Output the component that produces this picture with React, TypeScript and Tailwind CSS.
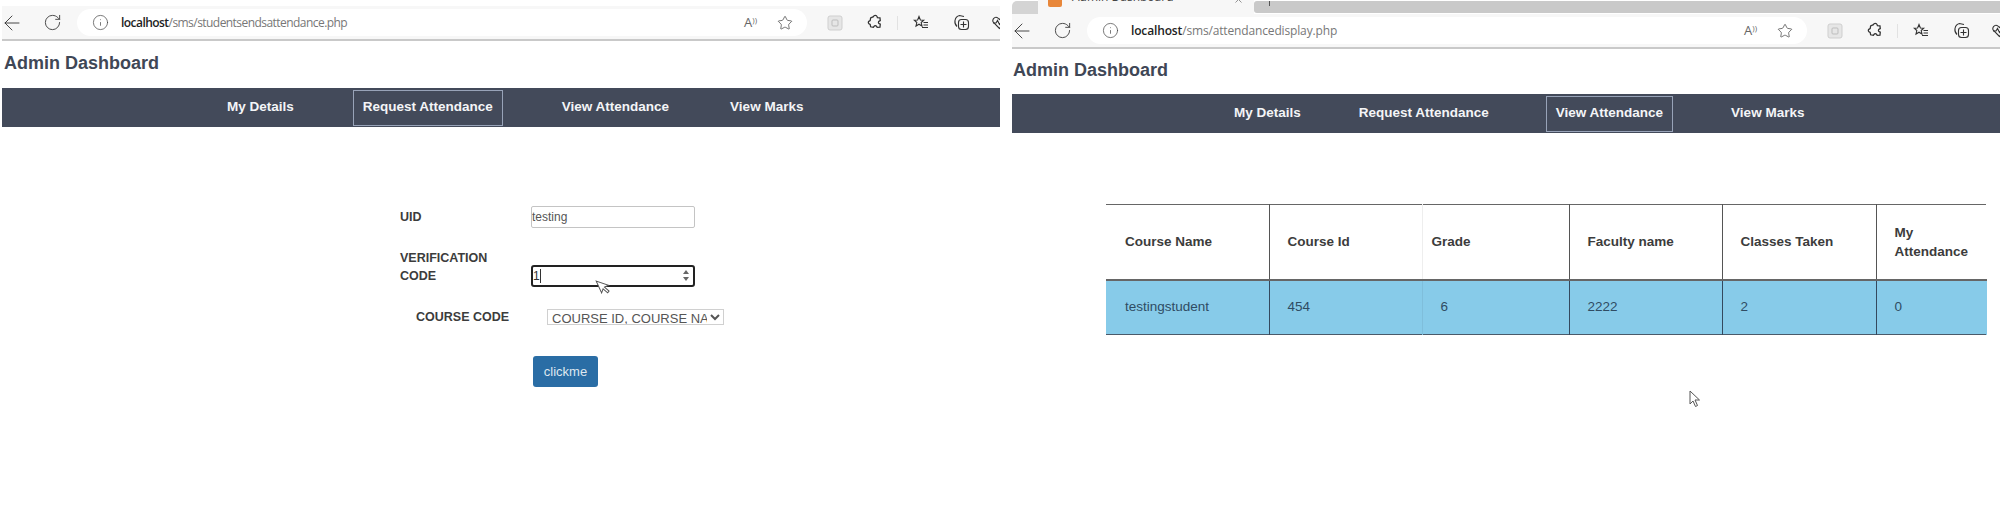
import { ArrowLeft, RotateCw, Info, Star, X } from 'lucide-react'

const NAV = ['My Details', 'Request Attendance', 'View Attendance', 'View Marks']

const HEAD_CELLS = [
  { label: 'Course Name', w: 'w-[163px]', pad: 'pl-[19px]', border: 'border-[#555]' },
  { label: 'Course Id', w: 'w-[153px]', pad: 'pl-[18px]', border: 'border-r-[#eee]' },
  { label: 'Grade', w: 'w-[147px]', pad: 'pl-[9px]', border: 'border-[#555]' },
  { label: 'Faculty name', w: 'w-[153px]', pad: 'pl-[18px]', border: 'border-[#555]' },
  { label: 'Classes Taken', w: 'w-[154px]', pad: 'pl-[18px]', border: 'border-[#555]' },
  { label: 'My Attendance', w: 'w-[110px]', pad: 'pl-[18px] pr-[10px]', border: 'border-r-white' },
]

const ROW_CELLS = [
  { value: 'testingstudent', pad: 'pl-[19px]', border: 'border-[#34495e]' },
  { value: '454', pad: 'pl-[18px]', border: 'border-r-[#7fbedb]' },
  { value: '6', pad: 'pl-[18px]', border: 'border-[#34495e]' },
  { value: '2222', pad: 'pl-[18px]', border: 'border-[#34495e]' },
  { value: '2', pad: 'pl-[18px]', border: 'border-[#34495e]' },
  { value: '0', pad: 'pl-[18px]', border: 'border-r-[#87cbe9]' },
]

function ToolbarIcons() {
  return (
    <div className="flex items-center text-[#555]">
      {/* square thing */}
      <svg width="16" height="16" viewBox="0 0 16 16" fill="none" className="ml-[20px]">
        <rect x="1" y="1" width="14" height="14" rx="2" fill="#e6e6e6" stroke="#cfcfcf" />
        <rect x="5" y="5" width="6" height="6" rx="1" stroke="#bdbdbd" />
      </svg>
      {/* puzzle */}
      <svg width="17" height="17" viewBox="0 0 16 16" fill="none" stroke="#333" strokeWidth="1.2" className="ml-[24px]">
        <path d="M6 2.500c.5-1.500 3-1.500 3.500 0l.3.900 2.400.2.3 2.600-1 .5c-1 .6-1 1.800 0 2.400l1 .5-.3 2.700-2.600.3-.6-1c-.6-1-1.800-1-2.400 0l-.6 1-2.600-.6L3 9.800l-1-.5C1 8.700 1 7.300 2 6.700l1-.5.400-2.600z" />
      </svg>
      <div className="ml-[13px] w-px h-[14px] bg-[#e2e2e2]" />
      {/* favourites */}
      <svg width="16" height="16" viewBox="0 0 16 16" fill="none" stroke="#333" strokeWidth="1.1" className="ml-[15px]">
        <path d="M6 1.500 7.400 5l3.300.2-2.500 2.300.8 3.500L6 9.200 3 11l.8-3.500L1.300 5.200 4.600 5z" />
        <path d="M10.500 7.500h4.500M10.500 10h4.500M9 12.500h6" />
      </svg>
      {/* collections */}
      <svg width="17" height="17" viewBox="0 0 17 17" fill="none" stroke="#333" strokeWidth="1.1" className="ml-[24px]">
        <path d="M4 12.500C2.500 11 1.500 9 2 6.500 2.500 4 4 2 6.500 1.500L11 2.500" />
        <rect x="5.500" y="5.500" width="10" height="10" rx="3" />
        <path d="M10.500 7.500v6M7.500 10.500h6" />
      </svg>
      {/* heartbeat, runs off the window */}
      <svg width="17" height="16" viewBox="0 0 17 16" fill="none" stroke="#333" strokeWidth="1.1" className="ml-[21px] shrink-0">
        <path d="M8.500 13.500 2.500 7.500C0.500 5 3.500 1.500 6 2.500c1 .4 2 1.500 2.500 2 .5-.5 1.500-1.600 2.500-2 2.500-1 5.500 2.500 3.500 5z" />
        <path d="M2 8h3l1.500-2.500 2 4 1.500-2h5" />
      </svg>
    </div>
  )
}

function BrowserBar({ host, path, pillWidth, urlClass }: { host: string; path: string; pillWidth: string; urlClass: string }) {
  return (
    <div className="h-[35px] bg-[#f7f7f7] border-b-2 border-[#c9c9c9] flex items-center overflow-hidden">
      <ArrowLeft size={24} strokeWidth={0.9} className="-ml-[2px] shrink-0 text-[#333]" />
      <RotateCw size={19} strokeWidth={1.1} className="ml-[19px] shrink-0 text-[#333]" />
      <div className={`ml-[15px] h-[27px] rounded-full bg-white flex items-center shrink-0 ${pillWidth}`}>
        <Info size={17} strokeWidth={1} className="ml-[15px] shrink-0 text-[#444]" />
        <span className={`ml-[12px] font-['Open_Sans',sans-serif] text-[12px] text-[#777] ${urlClass}`}>
          <span className="text-[#222] font-semibold">{host}</span>
          {path}
        </span>
        <div className="ml-auto flex items-center">
          <span className="font-['Open_Sans',sans-serif] text-[13px] text-[#666] leading-none">
            A<sup className="text-[8px]">))</sup>
          </span>
          <Star size={16} strokeWidth={1.1} className="ml-[20px] mr-[14px] text-[#444]" />
        </div>
      </div>
      <ToolbarIcons />
    </div>
  )
}

function NavBar({ active, items }: { active: string; items: string[] }) {
  return (
    <nav className={`h-[39px] bg-[#434a5a] flex items-center font-['Liberation_Sans',sans-serif] font-bold text-[13.500px] text-[#f4f5f7] ${items[0]}`}>
      {NAV.map((label, i) => (
        <a
          key={label}
          className={`h-[36px] flex items-center px-[9px] border ${i > 0 ? items[i] : ''} ${
            label === active ? 'border-[#98a3b8]' : 'border-transparent'
          }`}
        >
          {label}
        </a>
      ))}
    </nav>
  )
}

function Title({ className }: { className: string }) {
  return (
    <h1 className={`font-['Liberation_Sans',sans-serif] font-bold text-[18px] leading-[24px] text-[#3f4756] ${className}`}>
      Admin Dashboard
    </h1>
  )
}

function RequestForm() {
  return (
    <form className="ml-[398px] mt-[79px] font-['Liberation_Sans',sans-serif] text-[#3c3c3c]">
      <div className="flex items-center h-[22px]">
        <label className="w-[131px] font-bold text-[12.500px]">UID</label>
        <input
          readOnly
          value="testing"
          className="w-[164px] h-[22px] border border-[#c4c4c4] rounded-[2px] bg-white text-[12px] text-[#555] outline-none"
        />
      </div>
      <div className="flex items-start mt-[21px] h-[38px]">
        <label className="w-[131px] font-bold text-[12.500px] leading-[18px]">
          VERIFICATION
          <br />
          CODE
        </label>
        <div className="relative mt-[16px] w-[164px] h-[22px] border-2 border-[#222] rounded-[3px] bg-white flex items-center text-[12px] text-[#333]">
          1<span className="w-px h-[14px] bg-[#333]" />
          <svg width="8" height="13" viewBox="0 0 8 13" className="absolute right-[3px] top-[2px]" fill="#666">
            <path d="M4 1 7 5H1zM4 12 1 8h6z" />
          </svg>
        </div>
      </div>
      <div className="flex items-center mt-[22px] h-[16px] pl-[16px]">
        <label className="w-[131px] font-bold text-[12.500px]">COURSE CODE</label>
        <select className="w-[177px] h-[16px] border border-[#d0d0d0] bg-white text-[13px] text-[#555] outline-none">
          <option>COURSE ID, COURSE NAME</option>
        </select>
      </div>
      <button
        type="button"
        className="block ml-[133px] mt-[31px] w-[65px] h-[31px] rounded-[3px] bg-[#2a6da5] text-[13px] text-[#dfe8f0]"
      >
        clickme
      </button>
    </form>
  )
}

function AttendanceTable() {
  return (
    <table className="ml-[94px] mt-[71px] w-[880px] table-fixed border-collapse font-['Liberation_Sans',sans-serif] text-[13.500px]">
      <thead>
        <tr className="h-[75px] border-t border-b-2 border-[#666]">
          {HEAD_CELLS.map((c) => (
            <th key={c.label} className={`${c.w} ${c.pad} border-r ${c.border} text-left font-bold leading-[19px] text-[#3c3c3c]`}>
              {c.label}
            </th>
          ))}
        </tr>
      </thead>
      <tbody>
        <tr className="h-[55px] bg-[#87cbe9] border-b border-[#4a5a6a]">
          {ROW_CELLS.map((c) => (
            <td key={c.value} className={`${c.pad} border-r ${c.border} text-[#2f4c63]`}>
              {c.value}
            </td>
          ))}
        </tr>
      </tbody>
    </table>
  )
}

function ArrowCursor({ className }: { className: string }) {
  return (
    <svg width="13" height="18" viewBox="0 0 13 18" className={`absolute ${className}`} fill="white" stroke="#555" strokeWidth="1">
      <path d="M1 1v13l3-3 2.500 5.500 2-1L6 10h4.500z" />
    </svg>
  )
}

export default function App() {
  return (
    <div className="w-[2000px] h-[523px] bg-white flex overflow-hidden">
      {/* left capture */}
      <section className="relative w-[998px] ml-[2px] pt-[6px] shrink-0">
        <BrowserBar
          host="localhost"
          path="/sms/studentsendsattendance.php"
          pillWidth="w-[730px]"
          urlClass="tracking-[-0.55px]"
        />
        <Title className="mt-[10px] ml-[2px]" />
        <div className="mt-[13px]">
          <NavBar
            active="Request Attendance"
            items={['pl-[215px]', 'ml-[49px]', 'ml-[49px]', 'ml-[41px]']}
          />
        </div>
        <RequestForm />
        <ArrowCursor className="left-[596px] top-[277px] rotate-[-25deg]" />
      </section>

      {/* right capture */}
      <section className="relative w-[988px] ml-[12px] shrink-0">
        {/* tab strip, cut by the top of the picture */}
        <div className="h-[14px] bg-white flex overflow-hidden">
          <div className="w-[26px] mt-[1px] rounded-tl-[5px] bg-[#d4d4d4]" />
          <div className="w-[216px] bg-[#f7f7f7] flex items-start pl-[10px]">
            <span className="w-[14px] h-[7px] rounded-b-[2px] bg-[#e8873a]" />
            <span className="ml-[10px] -mt-[9px] font-['Open_Sans',sans-serif] text-[12px] leading-[12px] text-[#444]">
              Admin Dashboard
            </span>
            <X size={11} strokeWidth={1.2} className="ml-auto mr-[10px] -mt-[6px] text-[#444]" />
          </div>
          <div className="flex-1 mt-[1px] mb-[1px] rounded-l-[3px] bg-[#c9c9c9] pl-[15px]">
            <div className="w-px h-[5px] bg-[#555]" />
          </div>
        </div>
        <BrowserBar
          host="localhost"
          path="/sms/attendancedisplay.php"
          pillWidth="w-[720px]"
          urlClass="tracking-[-0.15px]"
        />
        <Title className="mt-[9px] ml-[1px]" />
        <div className="mt-[12px]">
          <NavBar
            active="View Attendance"
            items={['pl-[212px]', 'ml-[38px]', 'ml-[47px]', 'ml-[48px]']}
          />
        </div>
        <AttendanceTable />
        <ArrowCursor className="left-[677px] top-[390px]" />
      </section>
    </div>
  )
}
